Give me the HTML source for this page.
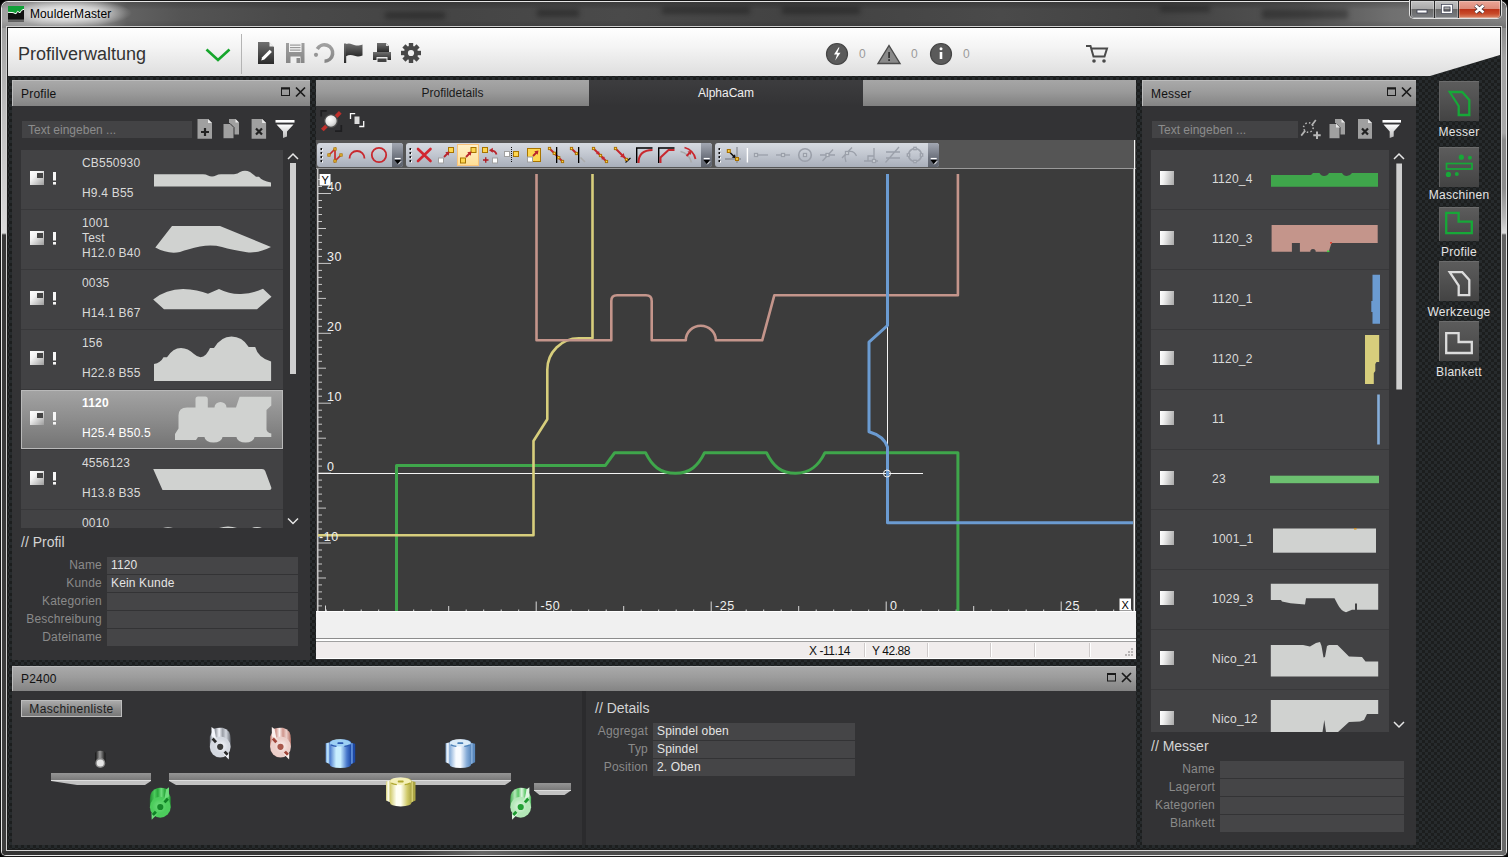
<!DOCTYPE html>
<html><head><meta charset="utf-8">
<style>
*{box-sizing:border-box;margin:0;padding:0}
html,body{width:1508px;height:857px;overflow:hidden;background:#000}
body{font-family:"Liberation Sans",sans-serif;font-size:12px;color:#ddd;position:relative}
.abs{position:absolute}


#client{left:8px;top:28px;width:1492px;height:821px;overflow:hidden;background-color:#1c1e1e;background-image:conic-gradient(from 90deg,#272b2d 25%,#1c1e1e 0 50%,#272b2d 0 75%,#1c1e1e 0);background-size:6px 6px;background-position:4px 1px}
#hdr{left:8px;top:28px;width:1492px;height:48px;background:linear-gradient(#ffffff,#f4f4f4 40%,#dedede);clip-path:polygon(0 0,1492px 0,1492px 27px,1422px 48px,0 48px)}
.phead{background:linear-gradient(#aaaaaa,#9c9c9c 45%,#848484);color:#111;height:26px;line-height:28px;padding-left:9px;font-size:12px;letter-spacing:.2px;box-shadow:inset 1px 1px 0 #bcbcbc}
.pbody{background:#333335}
.lbl{color:#8a8a8a;text-align:right;font-size:12px}
.fld{background:#454547;color:#e4e4e4;height:17px;line-height:17px;padding-left:4px;font-size:12px}

.it{position:absolute;left:21px;width:262px;height:59px;background:#424244}
.it.sel{background:linear-gradient(#a3a3a3,#8c8c8c 50%,#747474);border:1px solid #b9b9b9;color:#fff}
.it .t{position:absolute;left:61px;font-size:12px;color:#dadada;white-space:nowrap;line-height:15px;letter-spacing:.2px}
.it.sel .t{color:#fff}
.cb{position:absolute;width:14px;height:14px;background:linear-gradient(135deg,#ffffff,#f2f2f2 35%,#9c9c9c)}
.cb i{position:absolute;right:1px;top:1.500px;width:6px;height:5.500px;background:#444}
.ex{position:absolute;width:3px;height:13px;font-size:0;background:linear-gradient(#f6f6f6,#f6f6f6) 0 0/3px 8.500px no-repeat,linear-gradient(#f6f6f6,#f6f6f6) 0 10px/3px 2.600px no-repeat}
.inp{position:absolute;background:#434345;color:#8c8c8c;font-size:12px;height:17px;line-height:19px;padding-left:6px;letter-spacing:0}
.sec{position:absolute;font-size:15px;color:#d4d4d4}
.lbl{position:absolute;color:#8a8a8a;text-align:right;font-size:12px;height:16px;line-height:16px;letter-spacing:.2px}
.fld{position:absolute;background:#454547;color:#e4e4e4;height:16.600px;line-height:16px;padding-left:4px;font-size:12px;letter-spacing:.15px}

.tab{position:absolute;top:80px;height:26px;line-height:27px;text-align:center;font-size:12px;color:#1a1a1a;background:linear-gradient(#a6a6a6,#9a9a9a 45%,#808080)}
.tab.act{background:linear-gradient(#3d3d3f,#333335);color:#f0f0f0}
.tb{position:absolute;top:143px;height:24px;border-radius:3px;background:linear-gradient(#d6dae1,#c3c8d1 45%,#a9afba);overflow:hidden}
.tb .ov{position:absolute;right:0;top:0;width:11px;height:24px;background:linear-gradient(#a2a7b2,#6d727d 60%,#5d626c)}

.mi{position:absolute;left:1151px;width:238px;height:59px;background:#424244}
.mi .cb2{position:absolute;left:9px;top:21px;width:14px;height:14px;background:linear-gradient(100deg,#ffffff,#f0f0f0 30%,#a8a8a8)}
.mi .t{position:absolute;left:61px;top:22px;font-size:12px;color:#dadada;letter-spacing:.25px;line-height:15px}
.sb{position:absolute;left:1439px;width:40px;background:linear-gradient(#5c5c5c,#505050 50%,#434343);border-top:1px solid #6c6c6c;border-left:1px solid #626262}
.sl{position:absolute;width:90px;left:1414px;text-align:center;font-size:12px;color:#e4e4e4;letter-spacing:.3px;line-height:14px}

#f0{left:0;top:0;width:1508px;height:857px;background:#161616;border-radius:8px 8px 5px 5px}
#f1{left:1px;top:1px;width:1506px;height:855px;background:#e6e6e6;border-radius:7px 7px 5px 5px}
#f2{left:2px;top:2px;width:1504px;height:853px;border-radius:6px 6px 4px 4px;overflow:hidden;background:#3a3a3a}
#tbar{left:0;top:0;width:1504px;height:26px;background:linear-gradient(90deg,#a0a0a0 0,#b0b0b0 40px,#969696 95px,#626262 125px,#545454 180px,#4a4a4a 280px,#444 420px,#4a4a4a 620px,#424242 800px,#4a4a4a 1000px,#424242 1150px,#525252 1300px,#707070 1390px,#828282 1504px)}
#tshade{left:0;top:0;width:1504px;height:26px;background:linear-gradient(#00000030,#00000000 30%,#00000000 70%,#00000020)}
#lband{left:0;top:26px;width:4px;height:827px;background:linear-gradient(#a2a2a2 0,#c0c0c0 90px,#dadada 205px,#383838 207px,#3e3e3e 100%)}
#rband{left:1500px;top:26px;width:4px;height:827px;background:linear-gradient(#8c8c8c 0,#a4a4a4 30px,#a8a8a8 105px,#8a8a8a 112px,#8c8c8c 160px,#b8b8b8 190px,#dcdcdc 205px,#606060 207px,#787878 400px,#686868 100%)}
#bband{left:0;top:849px;width:1504px;height:4px;background:linear-gradient(90deg,#333 0,#3a3a3a 400px,#666 480px,#4a4a4a 560px,#484848 900px,#5c5c5c 1200px,#6c6c6c 1504px)}
#f3{left:6px;top:26px;width:1496px;height:825px;background:#cfcfcf}
#f4{left:7px;top:27px;width:1494px;height:823px;background:#1c1c1c}
.wb{position:absolute;top:1px;height:17px}
</style></head><body>
<div id="f0" class="abs"></div><div id="f1" class="abs"></div>
<div id="f2" class="abs"><div id="tbar" class="abs"></div><div id="tshade" class="abs"></div><div id="lband" class="abs"></div><div id="rband" class="abs"></div><div id="bband" class="abs"></div><div class="abs" style="left:-2px;margin-left:385px;top:-2px;margin-top:12px;width:60px;height:7px;background:#0000004a;filter:blur(2.500px)"></div><div class="abs" style="left:-2px;margin-left:537px;top:-2px;margin-top:9px;width:42px;height:8px;background:#0000004a;filter:blur(2.500px)"></div><div class="abs" style="left:-2px;margin-left:662px;top:-2px;margin-top:7px;width:88px;height:7px;background:#0000004a;filter:blur(2.500px)"></div><div class="abs" style="left:-2px;margin-left:782px;top:-2px;margin-top:7px;width:78px;height:7px;background:#0000004a;filter:blur(2.500px)"></div><div class="abs" style="left:-2px;margin-left:1262px;top:-2px;margin-top:9px;width:86px;height:10px;background:#0000004a;filter:blur(2.500px)"></div><div class="abs" style="left:-2px;margin-left:1160px;top:-2px;margin-top:6px;width:50px;height:6px;background:#0000004a;filter:blur(2.500px)"></div></div>
<div class="abs" style="left:8px;top:2px;width:130px;height:24px;background:radial-gradient(ellipse 62px 14px at 62px 11px,#ffffffd0,#ffffff90 50%,#ffffff00 100%)"></div>
<svg class="abs" style="left:8px;top:5px" width="18" height="17" viewBox="8 5 18 17">
 <rect x="8" y="6" width="16" height="15.500" fill="#111"/>
 <path d="M8 6 h16 v3.500 l-2.500 1 l-1.500 2.500 l-2.500 -1.500 l-1.500 2.500 l-3 -1.200 l-5 -0.300z" fill="#12a038"/>
 <path d="M8 12.300 l5 0.300 l3 1.200 l1.500 -2.500 l2.500 1.500 l1.500 -2.500 l2.500 -1" fill="none" stroke="#fff" stroke-width="1"/>
 <rect x="8" y="19.500" width="16" height="2" fill="#666"/>
</svg>
<div class="abs" style="left:30px;top:7px;font-size:12px;color:#000;line-height:14px;letter-spacing:.1px">MoulderMaster</div>
<!-- window buttons -->
<div class="abs" style="left:1409px;top:0;width:93px;height:19px;background:#e2e2e2;border-radius:0 0 5px 5px"></div>
<div class="abs" style="left:1410px;top:0;width:91px;height:18px;background:#2a2a2a;border-radius:0 0 4px 4px"></div>
<div class="wb" style="left:1411px;width:23px;border-radius:0 0 0 3px;background:linear-gradient(#c2c2c2 0,#a8a8a8 47%,#6a6a6a 50%,#7a7c80 100%);box-shadow:inset 0 0 0 1px #ffffff50"></div>
<div class="wb" style="left:1435px;width:23px;background:linear-gradient(#c2c2c2 0,#a8a8a8 47%,#6a6a6a 50%,#7a7c80 100%);box-shadow:inset 0 0 0 1px #ffffff50"></div>
<div class="wb" style="left:1459px;width:41px;border-radius:0 0 3px 0;background:linear-gradient(#eba697 0,#dc8a78 47%,#bc3318 50%,#c84a2a 75%,#d98a6c 100%);box-shadow:inset 0 0 0 1px #ffffff40"></div>
<svg class="abs" style="left:1409px;top:0" width="93" height="19" viewBox="1409 0 93 19">
 <rect x="1417" y="10" width="10" height="3" fill="#fff" stroke="#3a3e50" stroke-width="0.800"/>
 <rect x="1442.500" y="5.500" width="9" height="7" fill="none" stroke="#fff" stroke-width="2.200"/>
 <rect x="1441.500" y="4.500" width="11" height="9" fill="none" stroke="#3a3e50" stroke-width="0.700"/><rect x="1444" y="7" width="6" height="4" fill="none" stroke="#3a3e50" stroke-width="0.700"/>
 <path d="M1475.500 5.500 L1483.500 12.500 M1483.500 5.500 L1475.500 12.500" stroke="#3a3038" stroke-width="4"/>
 <path d="M1475.500 5.500 L1483.500 12.500 M1483.500 5.500 L1475.500 12.500" stroke="#fff" stroke-width="2.600"/>
</svg>
<div id="f3" class="abs"></div><div id="f4" class="abs"></div>
<div id="client" class="abs"></div>
<div id="hdr" class="abs"></div>
<div class="abs" style="left:18px;top:44px;font-size:18px;color:#333">Profilverwaltung</div>
<svg class="abs" style="left:0;top:28px" width="1508" height="48" viewBox="0 28 1508 48">
 <defs>
  <linearGradient id="gd" x1="0" y1="0" x2="0" y2="1"><stop offset="0" stop-color="#707070"/><stop offset="1" stop-color="#2a2a2a"/></linearGradient>
  <linearGradient id="gg" x1="0" y1="0" x2="0" y2="1"><stop offset="0" stop-color="#a0a0a0"/><stop offset="1" stop-color="#868686"/></linearGradient>
 </defs>
 <!-- chevron -->
 <path d="M206.5 49.5 L218 60 L229.5 49.5" fill="none" stroke="#16a62c" stroke-width="2.6"/>
 <rect x="241" y="34" width="1" height="40" fill="#b4b4b4"/>
 <!-- doc edit -->
 <path d="M258 42 h11 l5 5 v17 h-16z" fill="url(#gd)"/>
 <path d="M269.5 42 v4.5 h4.5z" fill="#eee"/>
 <path d="M261.2 60.5 l1-3.2 7.5-7.5 2.2 2.2 -7.5 7.5z" fill="#fff"/>
 <!-- save -->
 <path d="M286 43 h18.500 v20 h-18.5z" fill="url(#gg)"/>
 <rect x="289" y="43" width="12.500" height="9" fill="#f3f3f3"/>
 <rect x="290" y="44.500" width="10.500" height="1.200" fill="#999"/><rect x="290" y="47" width="10.500" height="1.200" fill="#999"/><rect x="290" y="49.500" width="10.500" height="1.200" fill="#999"/>
 <rect x="290.500" y="56.500" width="10" height="6.500" fill="#efefef"/><rect x="296.500" y="58" width="3.500" height="5" fill="#8a8a8a"/>
 <!-- undo -->
 <path d="M317.300 49 A8.200 8.200 0 1 1 324.500 61.200" fill="none" stroke="url(#gg)" stroke-width="3.600"/>
 <circle cx="316" cy="54.800" r="2.100" fill="#969696"/>
 <!-- flag -->
 <rect x="344" y="43.500" width="2.200" height="19.500" fill="url(#gd)"/>
 <path d="M346 44 c4 -1.500 6 0.500 9 1.200 c3 0.700 5 0 7.500 -0.800 v11 c-3 1.200 -5 1.400 -8 0.400 c-3 -1 -5.500 -1.200 -8.500 0.400z" fill="url(#gd)"/>
 <!-- print -->
 <path d="M377 43 h9 l3 3 v6 h-12z" fill="url(#gd)"/><path d="M386 43 v3 h3z" fill="#ddd"/>
 <path d="M373 52 h18 v8 h-3.500 v-3 h-11 v3 h-3.500z" fill="url(#gd)"/>
 <rect x="377.500" y="58.500" width="9" height="3.500" fill="#444"/>
 <!-- gear -->
 <g transform="translate(411 53)"><g fill="#484848">
  <rect x="-2.200" y="-10" width="4.400" height="20"/><rect x="-2.200" y="-10" width="4.400" height="20" transform="rotate(45)"/><rect x="-2.200" y="-10" width="4.400" height="20" transform="rotate(90)"/><rect x="-2.200" y="-10" width="4.400" height="20" transform="rotate(135)"/>
  <circle r="7.200"/></g><circle r="3.100" fill="#f0f0f0"/></g>
 <!-- status -->
 <circle cx="837" cy="54" r="10.500" fill="#5a5a5a" stroke="#454545" stroke-width="1.200"/>
 <path d="M838.500 47.500 l-4.500 7 h3 l-1.800 6 l5.300 -7.800 h-3.200 l2.200 -5.200z" fill="#fff"/>
 <path d="M889 45.500 L900 63.500 H878Z" fill="#8a8a8a" stroke="#4a4a4a" stroke-width="1.400" stroke-linejoin="miter"/>
 <rect x="888.200" y="52" width="1.800" height="6" fill="#333"/><rect x="888.200" y="59.200" width="1.800" height="1.800" fill="#333"/>
 <circle cx="941" cy="54" r="10.500" fill="#5a5a5a" stroke="#454545" stroke-width="1.200"/>
 <rect x="939.700" y="52" width="2.600" height="7" fill="#fff"/><circle cx="941" cy="48.800" r="1.500" fill="#fff"/>
 <!-- cart -->
 <path d="M1086 46 h4.500 l3 10.500 h11 l2.500 -8 h-15" fill="none" stroke="#4a4a4a" stroke-width="2"/>
 <circle cx="1094" cy="61" r="1.800" fill="#4a4a4a"/><circle cx="1104" cy="61" r="1.800" fill="#4a4a4a"/>
</svg>
<div class="abs" style="left:859px;top:47px;font-size:12px;color:#9a9a9a">0</div>
<div class="abs" style="left:911px;top:47px;font-size:12px;color:#9a9a9a">0</div>
<div class="abs" style="left:963px;top:47px;font-size:12px;color:#9a9a9a">0</div>

<!-- Profile panel -->
<div class="abs phead" style="left:12px;top:80px;width:298px">Profile</div>
<div class="abs pbody" id="pl" style="left:12px;top:106px;width:298px;height:554px"></div>

<div class="inp" style="left:22px;top:121px;width:170px">Text eingeben ...</div>
<svg class="abs" style="left:195px;top:117px" width="105" height="24" viewBox="195 117 105 24">
 <defs><linearGradient id="gw" x1="0" y1="0" x2="0" y2="1"><stop offset="0" stop-color="#ffffff"/><stop offset="1" stop-color="#b8b8b8"/></linearGradient></defs>
 <g fill="#a0a0a0">
  <path d="M197.500 119 h10.500 l4 4 v15.800 h-14.500z"/>
  <path d="M229 119 h6.500 l3.500 3.500 v12 h-10z"/><path d="M223 123.500 h7 l4 4 v11.300 h-11z" stroke="#333335" stroke-width="1"/>
  <path d="M251.600 119 h10.500 l4 4 v15.800 h-14.500z"/>
 </g>
 <path d="M208 119 v4 h4z M262.100 119 v4 h4z M235.500 119 v3.500 h3.500z" fill="#e8e8e8"/>
 <path d="M205 128 v8 M201 132 h8" stroke="#222" stroke-width="2.200"/>
 <path d="M256 128.500 l6 6 M262 128.500 l-6 6" stroke="#222" stroke-width="2.200"/>
 <rect x="275.500" y="120" width="19" height="2.600" fill="#fff"/>
 <path d="M276.500 124.500 h17 l-6.500 7 v5 l-4 1.500 v-6.500z" fill="url(#gw)"/>
</svg>
<!-- list -->
<div class="abs" style="left:21px;top:150px;width:262px;height:378px;background:#38383a"></div>
<div id="plist" class="abs" style="left:0;top:150px;width:312px;height:378px;overflow:hidden">
<div style="position:absolute;left:0;top:-150px">
<div class="it" style="top:150px"><div class="cb" style="left:9px;top:21px"><i></i></div><div class="ex" style="left:31.5px;top:21.8px"></div><div class="t" style="top:6px;left:61px">CB550930</div><div class="t" style="top:36px;left:61px">H9.4 B55</div></div>
<div class="it" style="top:210px"><div class="cb" style="left:9px;top:21px"><i></i></div><div class="ex" style="left:31.5px;top:21.8px"></div><div class="t" style="top:6px;left:61px">1001</div><div class="t" style="top:21px;left:61px">Test</div><div class="t" style="top:36px;left:61px">H12.0 B40</div></div>
<div class="it" style="top:270px"><div class="cb" style="left:9px;top:21px"><i></i></div><div class="ex" style="left:31.5px;top:21.8px"></div><div class="t" style="top:6px;left:61px">0035</div><div class="t" style="top:36px;left:61px">H14.1 B67</div></div>
<div class="it" style="top:330px"><div class="cb" style="left:9px;top:21px"><i></i></div><div class="ex" style="left:31.5px;top:21.8px"></div><div class="t" style="top:6px;left:61px">156</div><div class="t" style="top:36px;left:61px">H22.8 B55</div></div>
<div class="it sel" style="top:390px"><div class="cb" style="left:8px;top:20px"><i></i></div><div class="ex" style="left:30.5px;top:20.8px"></div><div class="t" style="top:5px;left:60px;font-weight:bold">1120</div><div class="t" style="top:35px;left:60px">H25.4 B50.5</div></div>
<div class="it" style="top:450px"><div class="cb" style="left:9px;top:21px"><i></i></div><div class="ex" style="left:31.5px;top:21.8px"></div><div class="t" style="top:6px;left:61px">4556123</div><div class="t" style="top:36px;left:61px">H13.8 B35</div></div>
<div class="it" style="top:510px"><div class="cb" style="left:9px;top:21px"><i></i></div><div class="ex" style="left:31.5px;top:21.8px"></div><div class="t" style="top:6px;left:61px">0010</div></div>
<svg style="position:absolute;left:0;top:0" width="312" height="540" viewBox="0 0 312 540"><g fill="#d0d2d0"><path d="M154 174.300 H203 Q206 174.300 208 175.600 Q212 177.500 216 175.600 Q218 174.300 221 174.300 H234 Q238 174 240 172 Q245 169.500 250 172 Q254 175 256 176.800 H259 Q262 181 271 182.500 V186.600 H154Z"/><path d="M172 226 H220 L271 247 Q258 253.500 247 252.300 Q232 250 222 247 Q212 244.500 200 246.500 Q188 249 180 252 Q168 254.500 155.300 247.500Z"/><path d="M153.200 299.500 Q166 289 183 289 Q198 289.500 208 293.800 L219 289 Q230 294.500 241 294 Q254 293 263 288.800 L271.500 296.800 L257 309.300 H164Z"/><path d="M154 381 V363.900 Q160.500 363 163.500 357.200 H167 Q173 348 181 348 Q188 348 194 354 Q200.500 360 206 354.500 Q208.500 351.500 210 348 H214 Q221 336.600 231.500 336.600 Q242 336.600 248.700 346.900 H255.200 Q258 357.500 271.100 361.500 V381Z"/><path d="M175 440 V434 L178.500 428.500 V415.500 Q178.500 407.500 187 407.500 H195.500 V399 Q195.500 396.500 198 396.500 H205.300 Q207.800 396.500 207.800 399 V407.500 H214.500 A6 5.500 0 0 1 226.500 407.500 H236 L239.600 396.800 H271.300 V405.500 L266.500 410 V429.500 Q267 432.500 271.300 433.500 V437 H254.500 A9 5.600 0 0 1 236.500 437 H222.500 A9 5.600 0 0 1 204.500 437 H198 L196 440Z"/><path d="M153.200 469 H262 Q264.500 469 265.200 471 L271.300 487.500 Q271.800 490 269.500 490 H162.500Z"/><path d="M163 528 q5 -1.500 10 0z M219 528 q9 -3 18 0z M252 528 q5 -2 10 0z"/></g></svg>
</div></div>
<svg class="abs" style="left:286px;top:150px" width="14" height="380" viewBox="286 150 14 380">
 <path d="M288 159 l5 -5 l5 5" fill="none" stroke="#e6e6e6" stroke-width="1.500"/>
 <rect x="290" y="163" width="6" height="211" fill="#cfcfcf"/>
 <path d="M288 518.500 l5 5 l5 -5" fill="none" stroke="#e6e6e6" stroke-width="1.500"/>
</svg>
<div class="sec" style="left:21px;top:534px;font-size:14px">// Profil</div>
<div class="lbl" style="left:12px;top:557px;width:90px">Name</div><div class="fld" style="left:107px;top:557px;width:191px">1120</div>
<div class="lbl" style="left:12px;top:575px;width:90px">Kunde</div><div class="fld" style="left:107px;top:575px;width:191px">Kein Kunde</div>
<div class="lbl" style="left:12px;top:593px;width:90px">Kategorien</div><div class="fld" style="left:107px;top:593px;width:191px"></div>
<div class="lbl" style="left:12px;top:611px;width:90px">Beschreibung</div><div class="fld" style="left:107px;top:611px;width:191px"></div>
<div class="lbl" style="left:12px;top:629px;width:90px">Dateiname</div><div class="fld" style="left:107px;top:629px;width:191px"></div>

<!-- center -->
<div class="abs pbody" id="ctr" style="left:316px;top:80px;width:820px;height:580px"></div>

<div class="tab" style="left:316px;width:273px">Profildetails</div>
<div class="tab act" style="left:589px;width:274px">AlphaCam</div>
<div class="tab" style="left:863px;width:273px"></div>
<svg class="abs" style="left:318px;top:108px" width="52" height="28" viewBox="318 108 52 28">
 <defs><radialGradient id="ball" cx="0.4" cy="0.35" r="0.7"><stop offset="0" stop-color="#fff"/><stop offset="0.6" stop-color="#e2e2e2"/><stop offset="1" stop-color="#b0b0b0"/></radialGradient></defs>
 <path d="M321.200 116.500 v-5.700 h5.500 M341.300 125 v6.200 h-6.300" fill="none" stroke="#1e1e20" stroke-width="1.700"/>
 <path d="M322.300 130 L340.300 112.300" stroke="#c0302c" stroke-width="3.800"/>
 <circle cx="331" cy="121" r="6.300" fill="url(#ball)" stroke="#4a4a4a" stroke-width="1.200"/>
 <path d="M350.500 119 v-5.400 h4.700 M363.700 121 v5.500 h-4.500" fill="none" stroke="#fafafa" stroke-width="1.300"/>
 <rect x="354.500" y="116.500" width="5" height="7.500" fill="#dcdcdc"/>
</svg>
<div class="abs" style="left:316px;top:140px;width:820px;height:28px;background:#555"></div>
<div class="abs" style="left:316px;top:167.500px;width:820px;height:1.500px;background:#9a9a9a"></div>
<div class="abs" style="left:1133.500px;top:140px;width:1.500px;height:30px;background:#f4f4f4"></div>
<div class="tb" style="left:317px;width:86px"><div class="ov"></div></div>
<div class="tb" style="left:406px;width:306px"><div class="ov"></div></div>
<div class="tb" style="left:715px;width:224px"><div class="ov"></div></div>
<div class="abs" style="left:457px;top:144px;width:22px;height:22px;background:linear-gradient(#fff0c8,#ffdf96);border:1px solid #f9c27a"></div>
<svg class="abs" style="left:316px;top:140px" width="630" height="30" viewBox="316 140 630 30">
 <defs>
  <g id="ys"><rect x="-2.500" y="-2.500" width="5" height="5" fill="#fdd650" stroke="#a87400" stroke-width="1"/></g>
  <g id="ws"><rect x="-2.500" y="-2.500" width="5" height="5" fill="#fff" stroke="#a0a0a0" stroke-width="1"/></g>
  <g id="yn"><rect x="-1.150" y="-1.150" width="2.300" height="2.300" fill="#ffd84a" stroke="#a87000" stroke-width="0.900"/></g>
  <g id="grip"><path d="M0 0 v2 M0 4 v2 M0 8 v2 M0 12 v2" stroke="#111" stroke-width="1.600"/><path d="M1.200 1 v1.600 M1.200 5 v1.600 M1.200 9 v1.600 M1.200 13 v1.600" stroke="#fff" stroke-width="1"/></g>
  <g id="ovg"><rect x="-2.800" y="-1.100" width="6" height="1.200" fill="#fff"/><path d="M-3 1 h6.400 l-3.200 4z" fill="#000"/><path d="M0.800 5.300 l2.800 -3" stroke="#fff" stroke-width="1"/></g>
 </defs>
 <use href="#grip" x="321.300" y="148"/><use href="#grip" x="410.300" y="148"/><use href="#grip" x="719.300" y="148"/>
 <use href="#ovg" x="397.500" y="159"/><use href="#ovg" x="706.500" y="159"/><use href="#ovg" x="933.500" y="159"/>
 <!-- tb1 -->
 <path d="M329 155 L335 149 V161 L341 155" fill="none" stroke="#c8282e" stroke-width="1.700"/>
 <use href="#yn" x="329" y="155"/><use href="#yn" x="335" y="149"/><use href="#yn" x="335" y="161"/><use href="#yn" x="341" y="155"/>
 <path d="M349.500 158.500 A7.500 7.500 0 0 1 364.500 158.500" fill="none" stroke="#c8282e" stroke-width="1.800"/>
 <circle cx="379" cy="155" r="7.200" fill="none" stroke="#c8282e" stroke-width="1.800"/>
 <!-- tb2 -->
 <path d="M418 149 L430.500 161 M430.500 149 L418 161" stroke="#d22630" stroke-width="2.600" stroke-linecap="round"/>
 <use href="#ys" x="451" y="150"/><use href="#ws" x="441" y="160.500"/><path d="M444 157 L448 153" stroke="#b8242c" stroke-width="1.800"/><path d="M449.500 151.500 l-4.200 0.800 l3.400 3.400z" fill="#b8242c"/>
 <use href="#ys" x="473.500" y="150"/><use href="#ys" x="463" y="160.500"/><path d="M466 157 L470 153" stroke="#b8242c" stroke-width="1.800"/><path d="M471.500 151.500 l-4.200 0.800 l3.400 3.400z" fill="#b8242c"/>
 <use href="#ys" x="485" y="150"/><use href="#ws" x="495" y="160.500"/><path d="M483 160 h5.500 M485.750 157.300 v5.500" stroke="#b01820" stroke-width="1.300"/>
 <path d="M496.500 154.500 q-1 -4 -5.500 -4.200" fill="none" stroke="#b8242c" stroke-width="1.800"/><path d="M489 150.300 l3.800 -2.500 v5z" fill="#b8242c"/>
 <use href="#ws" x="507" y="154"/><use href="#ys" x="516" y="154"/><path d="M511.500 147 v15" stroke="#111" stroke-width="1" stroke-dasharray="1 1"/>
 <rect x="527.500" y="148.500" width="13" height="13" fill="#fdd650" stroke="#a87400"/><use href="#ws" x="530" y="159.500"/><path d="M533 156 L537 152" stroke="#b8242c" stroke-width="1.800"/><path d="M538.500 150.500 l-4.200 0.800 l3.400 3.400z" fill="#b8242c"/>
 <path d="M549 148 L563 162" stroke="#c4262e" stroke-width="1.900"/><rect x="556" y="147" width="1.300" height="16" fill="#000"/><use href="#yn" x="549.500" y="148.500"/><use href="#yn" x="554.300" y="153.300"/><use href="#yn" x="558.700" y="157.700"/><use href="#yn" x="562.500" y="161.500"/>
 <path d="M571 148 L577 154" stroke="#c4262e" stroke-width="1.900"/><rect x="578" y="147" width="1.300" height="16" fill="#000"/><path d="M580.500 157.500 L585 162" stroke="#aaa" stroke-width="1.600"/><use href="#yn" x="571.500" y="148.500"/><use href="#yn" x="576.500" y="153.500"/>
 <path d="M593 148 L607 162" stroke="#c4262e" stroke-width="1.900"/><path d="M599.500 154.500 l-3.600 -0.400 l3.200 -3.200z M601.500 156.500 l3.600 0.400 l-3.200 3.200z" fill="#c8282e"/><use href="#yn" x="593.500" y="148.500"/><use href="#yn" x="600.500" y="155.500"/><use href="#yn" x="606.500" y="161.500"/>
 <path d="M615 148 L627 160" stroke="#c4262e" stroke-width="1.900"/><path d="M624.500 157.500 l-4.400 -0.600 l3.800 -3.800z" fill="#c8282e"/><path d="M625.500 162.500 L630.500 158" stroke="#111" stroke-width="1.200"/><use href="#yn" x="615.500" y="148.500"/><use href="#yn" x="626.500" y="159.500"/>
 <path d="M636 163 V147.300 H652.500 V148.700 H637.400 V163Z" fill="#000"/><path d="M638.500 163 Q638.500 150 652.500 150" fill="none" stroke="#c8282e" stroke-width="2"/>
 <path d="M658 163 V147.300 H674.500 V148.700 H659.400 V163Z" fill="#000"/><path d="M660.500 163 V157.500 L668.500 150 H674.500" fill="none" stroke="#c8282e" stroke-width="2"/>
 <path d="M680.500 151.500 Q689 153.500 691.500 162.500" fill="none" stroke="#aaa" stroke-width="1.600"/><path d="M684.500 147.500 Q693.500 150 695.500 159" fill="none" stroke="#c8282e" stroke-width="1.800"/><path d="M686.500 156 L690 152.500" stroke="#c4262e" stroke-width="1.900"/><path d="M691.500 151 l-4 0.600 l3.400 3.400z" fill="#c8282e"/>
 <!-- tb3 -->
 <path d="M725 159 H741 M737 147 V163" stroke="#8a8e96" stroke-width="1.300"/><path d="M730 152.500 L734.500 157" stroke="#111" stroke-width="1.500"/><path d="M735.800 158.300 l-4 -0.800 l3.200 -3.200z" fill="#111"/><use href="#yn" x="728.800" y="151" transform="translate(-182.200 -37.750) scale(1.250)"/><use href="#yn" x="737" y="159" transform="translate(-184.250 -39.750) scale(1.250)"/>
 <rect x="746.700" y="148" width="1.400" height="14.500" fill="#fff"/>
 <g fill="none" stroke="#9ba0aa" stroke-width="1.300">
  <path d="M758 155 H768"/><rect x="754.500" y="153.500" width="3" height="3" fill="#d8dbe0"/>
  <path d="M776 155 H790"/><rect x="781.500" y="153.500" width="3" height="3" fill="#d8dbe0"/>
  <circle cx="805" cy="155" r="6.300" stroke-width="1.600"/><rect x="803.500" y="153.500" width="3" height="3" fill="#d8dbe0"/>
  <path d="M820 155 H835 M822.500 161 L833 149.500"/><rect x="826" y="153.500" width="3" height="3" fill="#d8dbe0"/>
  <path d="M842 158 L852 147.500 M846 162 Q843 154 849 151.500 Q854 150.500 856.500 156"/><rect x="845.500" y="151.500" width="3" height="3" fill="#d8dbe0"/>
  <path d="M874 148 V161 M864 161 H878 M868 161 v-5 h6"/><rect x="872.500" y="159.500" width="3" height="3" fill="#d8dbe0"/>
  <path d="M886 152 H900 M886 158 H900 M885.500 162.500 L899 147"/>
  <circle cx="915" cy="155" r="6.500" stroke-width="1.600"/><rect x="913.800" y="147.300" width="2.400" height="2.400" fill="#d8dbe0"/><rect x="913.800" y="160.300" width="2.400" height="2.400" fill="#d8dbe0"/><rect x="907.300" y="153.800" width="2.400" height="2.400" fill="#d8dbe0"/><rect x="920.300" y="153.800" width="2.400" height="2.400" fill="#d8dbe0"/>
 </g>
</svg>

<div class="abs" style="left:316px;top:169px;width:820px;height:443px;background:#3c3c3c"></div>
<svg class="abs" style="left:316px;top:169px" width="820" height="443" viewBox="316 169 820 443">
 <rect x="317" y="169" width="1.500" height="442" fill="#c4c4c4"/>
 <rect x="1133.500" y="140" width="1.500" height="472" fill="#f4f4f4"/>
 <path d="M318 605.9 h4 M318 598.9 h4 M318 591.9 h4 M318 584.9 h4 M318 578.0 h8 M318 571.0 h4 M318 564.0 h4 M318 557.0 h4 M318 550.0 h4 M318 543.0 h13 M318 536.0 h4 M318 529.0 h4 M318 522.0 h4 M318 515.0 h4 M318 508.1 h8 M318 501.1 h4 M318 494.1 h4 M318 487.1 h4 M318 480.1 h4 M318 473.1 h13 M318 466.1 h4 M318 459.1 h4 M318 452.1 h4 M318 445.1 h4 M318 438.2 h8 M318 431.2 h4 M318 424.2 h4 M318 417.2 h4 M318 410.2 h4 M318 403.2 h13 M318 396.2 h4 M318 389.2 h4 M318 382.2 h4 M318 375.2 h4 M318 368.2 h8 M318 361.3 h4 M318 354.3 h4 M318 347.3 h4 M318 340.3 h4 M318 333.3 h13 M318 326.3 h4 M318 319.3 h4 M318 312.3 h4 M318 305.3 h4 M318 298.4 h8 M318 291.4 h4 M318 284.4 h4 M318 277.4 h4 M318 270.4 h4 M318 263.4 h13 M318 256.4 h4 M318 249.4 h4 M318 242.4 h4 M318 235.4 h4 M318 228.5 h8 M318 221.5 h4 M318 214.5 h4 M318 207.5 h4 M318 200.5 h4 M318 193.5 h13 M318 186.5 h4 M318 179.5 h4" stroke="#c8c8c8" stroke-width="1" fill="none"/>
 <path d="M326.2 611 v-1.5 M343.7 611 v-1.5 M361.2 611 v-1.5 M378.7 611 v-1.5 M396.2 611 v-1.5 M413.7 611 v-1.5 M431.2 611 v-1.5 M448.7 611 v-5 M466.2 611 v-1.5 M483.7 611 v-1.5 M501.2 611 v-1.5 M518.7 611 v-1.5 M536.2 611 v-9.5 M553.7 611 v-1.5 M571.2 611 v-1.5 M588.7 611 v-1.5 M606.2 611 v-1.5 M623.7 611 v-5 M641.2 611 v-1.5 M658.7 611 v-1.5 M676.2 611 v-1.5 M693.7 611 v-1.5 M711.2 611 v-9.5 M728.7 611 v-1.5 M746.2 611 v-1.5 M763.7 611 v-1.5 M781.2 611 v-1.5 M798.7 611 v-5 M816.2 611 v-1.5 M833.7 611 v-1.5 M851.2 611 v-1.5 M868.7 611 v-1.5 M886.2 611 v-9.5 M903.7 611 v-1.5 M921.2 611 v-1.5 M938.7 611 v-1.5 M956.2 611 v-1.5 M973.7 611 v-5 M991.2 611 v-1.5 M1008.7 611 v-1.5 M1026.2 611 v-1.5 M1043.7 611 v-1.5 M1061.2 611 v-9.5 M1078.7 611 v-1.5 M1096.2 611 v-1.5 M1113.7 611 v-1.5 M1131.2 611 v-1.5 M325.500 611 v-5.500" stroke="#d8d8d8" stroke-width="1" fill="none"/>
 <!-- axes -->
 <path d="M318 473.500 H923" stroke="#f4f4f4" stroke-width="1.200"/>
 <path d="M887.500 325 V448" stroke="#f4f4f4" stroke-width="1"/>
 <g fill="none" stroke-linejoin="round">
 <!-- green -->
 <path d="M396.500 611 V465.400 H605.400 L614.700 452.700 H645.500 C652 466 660 473.300 675.400 473.300 C690 473.300 698 466 704.500 452.700 H766.500 C773 466 781 473.300 795.600 473.300 C810 473.300 818.500 466 825 452.700 H957.900 V611" stroke="#3fa64b" stroke-width="3"/>
 <!-- yellow -->
 <path d="M592.500 174 V338.300 H579 A31.500 31.500 0 0 0 547.300 370 V419.200 L533.500 441 V535.300 H318" stroke="#d7ce7c" stroke-width="2.600"/>
 <!-- pink -->
 <path d="M536.500 174 V340.300 H611.300 V301 Q611.300 295.300 617 295.300 H646 Q651.700 295.300 651.700 301 V340.300 H685.800 A15 14.500 0 0 1 715.800 340.300 H762.200 L774.300 295.300 H957.900 V174" stroke="#c4958b" stroke-width="2.600"/>
 <!-- blue -->
 <path d="M887.500 174 V325.500 L869 342.200 V431.700 Q884 436 887.500 447 V522.700 H1133" stroke="#6b9bd1" stroke-width="3"/>
 </g>
 <circle cx="887" cy="473.500" r="3.500" fill="none" stroke="#f4f4f4" stroke-width="1"/>
 <rect x="319.500" y="174" width="11" height="11.500" fill="#fff"/>
 <rect x="1119.500" y="598.500" width="11.500" height="12" fill="#fff"/>
 <g font-family="Liberation Sans" font-size="12.500" fill="#f0f0f0" letter-spacing="0.600">
  <text x="327" y="191.3">40</text><text x="327" y="261.2">30</text><text x="327" y="331.1">20</text><text x="327" y="401.0">10</text><text x="327" y="470.9">0</text><text x="319" y="540.8">-10</text>
  <text x="540.500" y="610">-50</text><text x="715" y="610">-25</text><text x="890" y="610">0</text><text x="1065" y="610">25</text>
 </g>
 <g font-family="Liberation Sans" font-size="11" fill="#000"><text x="321.500" y="184">Y</text><text x="1121.500" y="609">X</text></g>
</svg>
<div class="abs" style="left:316px;top:611px;width:820px;height:1px;background:#fff"></div>
<div class="abs" style="left:316px;top:612px;width:820px;height:26px;background:#f0f0f0"></div>
<div class="abs" style="left:316px;top:638px;width:820px;height:4px;background:linear-gradient(#8c8c8c 0,#8c8c8c 25%,#fff 25%,#fff 75%,#a0a0a0 75%)"></div>
<div class="abs" style="left:316px;top:642px;width:820px;height:17px;background:#f0ecec;border-bottom:1px solid #fff"></div>
<div class="abs" style="left:809px;top:644px;font-size:12px;color:#111;letter-spacing:-0.450px;line-height:15px">X -11.14</div>
<div class="abs" style="left:872px;top:644px;font-size:12px;color:#111;letter-spacing:-0.450px;line-height:15px">Y 42.88</div>
<svg class="abs" style="left:860px;top:642px" width="276" height="17" viewBox="860 642 276 17">
 <path d="M864.500 643 v14 M927.500 643 v14 M990.500 643 v14 M1034.500 643 v14 M1089.500 643 v14" stroke="#cfcaca" stroke-width="1"/>
 <path d="M865.500 643 v14 M928.500 643 v14 M991.500 643 v14 M1035.500 643 v14 M1090.500 643 v14" stroke="#fff" stroke-width="1"/>
 <g fill="#b8b4b4"><rect x="1131" y="654" width="2" height="2"/><rect x="1128" y="654" width="2" height="2"/><rect x="1131" y="651" width="2" height="2"/><rect x="1125" y="654" width="2" height="2"/><rect x="1128" y="651" width="2" height="2"/><rect x="1131" y="648" width="2" height="2"/></g>
</svg>


<!-- Messer panel -->
<div class="abs phead" style="left:1142px;top:80px;width:274px">Messer</div>
<div class="abs pbody" id="pr" style="left:1142px;top:106px;width:274px;height:739px"></div>

<div class="inp" style="left:1152px;top:121px;width:146px">Text eingeben ...</div>
<svg class="abs" style="left:1298px;top:117px" width="108" height="24" viewBox="1298 117 108 24">
 <g fill="#a0a0a0">
  <path d="M1335 119 h6.500 l3.500 3.500 v12 h-10z"/><path d="M1329 123.500 h7 l4 4 v11.300 h-11z" stroke="#333335" stroke-width="1"/>
  <path d="M1358 119 h10 l4 4 v15.800 h-14z"/>
 </g>
 <path d="M1341.500 119 v3.500 h3.500z M1368 119 v4 h4z M1336 123.500 v4 h4z" fill="#e8e8e8"/>
 <path d="M1362 128.500 l6 6 M1368 128.500 l-6 6" stroke="#222" stroke-width="2.200"/>
 <circle cx="1308.400" cy="127.500" r="4.800" fill="none" stroke="#b4b4b4" stroke-width="1.600" stroke-dasharray="1.500 2.270"/>
 <path d="M1311.800 125.200 L1315.800 120 M1301.200 135.600 L1305.200 130.600" stroke="#b4b4b4" stroke-width="1.700"/>
 <path d="M1317 131.500 v7.400 M1313.300 135.200 h7.400" stroke="#b8b8b8" stroke-width="2"/>
 <rect x="1382.500" y="120" width="18.500" height="2.600" fill="#fff"/>
 <path d="M1383.500 124.500 h16.500 l-6.300 7 v5 l-4 1.500 v-6.500z" fill="url(#gw)"/>
</svg>
<div class="abs" style="left:1151px;top:150px;width:238px;height:582px;background:#38383a"></div>
<div class="abs" style="left:0;top:150px;width:1420px;height:582px;overflow:hidden"><div style="position:absolute;left:0;top:-150px"><div class="mi" style="top:150px"><div class="cb2"></div><div class="t">1120_4</div></div><div class="mi" style="top:210px"><div class="cb2"></div><div class="t">1120_3</div></div><div class="mi" style="top:270px"><div class="cb2"></div><div class="t">1120_1</div></div><div class="mi" style="top:330px"><div class="cb2"></div><div class="t">1120_2</div></div><div class="mi" style="top:390px"><div class="cb2"></div><div class="t">11</div></div><div class="mi" style="top:450px"><div class="cb2"></div><div class="t">23</div></div><div class="mi" style="top:510px"><div class="cb2"></div><div class="t">1001_1</div></div><div class="mi" style="top:570px"><div class="cb2"></div><div class="t">1029_3</div></div><div class="mi" style="top:630px"><div class="cb2"></div><div class="t">Nico_21</div></div><div class="mi" style="top:690px"><div class="cb2"></div><div class="t">Nico_12</div></div>
<svg style="position:absolute;left:1260px;top:150px" width="130" height="600" viewBox="1260 150 130 600">
 <path d="M1271 186.800 V175 H1311 L1313 173 H1319.500 Q1321 176 1324 176 Q1327.500 176 1329 173 H1342 Q1343.500 176 1346.800 176 Q1350 176 1352 173 H1378 V186.800Z" fill="#3fa64b"/>
 <path d="M1271.600 225 H1377.700 V242.900 H1331.500 L1328.700 251.800 H1315.700 a2.700 2.700 0 0 0 -5.400 0 H1299.900 V243.100 H1291.900 V251.800 H1271.600Z" fill="#c4958b"/><rect x="1330" y="242" width="2" height="1.600" fill="#e04030"/><rect x="1327" y="250.500" width="2.400" height="1.600" fill="#40d040"/>
 <path d="M1372.500 274.700 H1380 V323.700 H1372.500 V312 h-1.200 v-11 h1.200Z" fill="#6b9bd1"/>
 <path d="M1365 335 H1379.200 V362 H1376.500 L1375.300 364 V371 L1373.800 373 V384 H1365Z" fill="#d7ce7c"/>
 <rect x="1377.200" y="394.500" width="2.600" height="50" fill="#86aedb"/>
 <rect x="1270" y="475.700" width="109" height="7.500" fill="#6cc070"/>
 <rect x="1273" y="528.500" width="103" height="24.200" fill="#d0d2d0"/>
 <rect x="1354" y="528" width="2.500" height="1.500" fill="#c88a20"/>
 <path d="M1270.800 583.800 H1378.200 V609.700 H1357 V603.500 h-2 V609.700 H1352 L1346 612.300 Q1341 611 1337.500 604 L1334.500 598.200 H1306 L1305 604.500 L1290.500 603.200 L1282 601.500 L1281 600 H1270.800Z" fill="#d0d2d0"/>
 <path d="M1270.800 676.500 V645 H1303 L1310 646.500 L1316 643 L1320 642 L1321.500 646 L1323.500 657.500 L1325 657 L1327 646 L1329 645 H1337.500 L1349 656.500 L1362 657 L1365.500 661.500 H1378.200 V676.500Z" fill="#d0d2d0"/>
 <path d="M1270.800 700 H1378.200 V714 H1367 L1364 720 L1360 721.500 L1349 722 L1338 732 H1326 L1324.300 720 L1322.500 732 H1270.800Z" fill="#d0d2d0"/>
</svg></div></div>
<svg class="abs" style="left:1392px;top:150px" width="14" height="582" viewBox="1392 150 14 582">
 <path d="M1394 159 l5 -5 l5 5" fill="none" stroke="#e6e6e6" stroke-width="1.500"/>
 <rect x="1396.300" y="163.500" width="5.700" height="226" fill="#cfcfcf"/>
 <path d="M1394 722 l5 5 l5 -5" fill="none" stroke="#e6e6e6" stroke-width="1.500"/>
</svg>
<div class="sec" style="left:1151px;top:738px;font-size:14px">// Messer</div>
<div class="lbl" style="left:1125px;top:761px;width:90px">Name</div><div class="fld" style="left:1220px;top:761px;width:184px"></div><div class="lbl" style="left:1125px;top:779px;width:90px">Lagerort</div><div class="fld" style="left:1220px;top:779px;width:184px"></div><div class="lbl" style="left:1125px;top:797px;width:90px">Kategorien</div><div class="fld" style="left:1220px;top:797px;width:184px"></div><div class="lbl" style="left:1125px;top:815px;width:90px">Blankett</div><div class="fld" style="left:1220px;top:815px;width:184px"></div>
<!-- sidebar -->
<div class="sb" style="top:81px;height:40px"></div><div class="sl" style="top:125px">Messer</div>
<div class="sb" style="top:147px;height:40px"></div><div class="sl" style="top:188px">Maschinen</div>
<div class="sb" style="top:207px;height:34px"></div><div class="sl" style="top:245px">Profile</div>
<div class="sb" style="top:261px;height:40px"></div><div class="sl" style="top:305px">Werkzeuge</div>
<div class="sb" style="top:321px;height:40px"></div><div class="sl" style="top:365px">Blankett</div>
<svg class="abs" style="left:1439px;top:81px" width="40" height="285" viewBox="1439 81 40 285">
 <g fill="none" stroke-width="2.300" stroke-linejoin="miter">
  <path d="M1449.700 92 H1462.200 L1469.300 100 V115 H1458.700 V106Z" stroke="#17a838"/>
  <rect x="1446.500" y="163.500" width="25.500" height="5.500" stroke="#17a838" stroke-width="1.700"/>
  <path d="M1446.200 212.800 H1458.600 V221.600 H1471.800 V233.200 H1446.200Z" stroke="#17a838"/>
  <path d="M1449.700 272.200 H1462.300 L1469.300 280 V295.200 H1458.700 V285.500Z" stroke="#dcdcdc"/>
  <path d="M1446.200 333.200 H1458.600 V342 H1471.800 V353 H1446.200Z" stroke="#dcdcdc"/>
 </g>
 <g fill="#17a838"><circle cx="1461.300" cy="157.200" r="2.600"/><circle cx="1469.900" cy="157.800" r="2"/><circle cx="1448.400" cy="174.400" r="2.600"/><circle cx="1456.800" cy="174" r="2"/></g>
</svg>

<!-- bottom -->
<div class="abs phead" style="left:12px;top:666px;width:1124px;height:25px;line-height:27px">P2400</div>
<div class="abs pbody" id="pb" style="left:12px;top:691px;width:1124px;height:154px"></div>

<div class="abs" style="left:21px;top:700px;width:101px;height:17px;background:linear-gradient(#aaaaaa,#8e8e8e 50%,#787878);border:1px solid #bdbdbd;color:#1c1c1c;font-size:12px;line-height:17px;text-align:center;letter-spacing:.35px">Maschinenliste</div>
<div class="abs" style="left:582px;top:691px;width:4px;height:154px;background:#2b2b2d"></div>
<svg class="abs" style="left:12px;top:691px" width="575" height="154" viewBox="12 691 575 154">
 <defs>
  <linearGradient id="tbl" x1="0" y1="0" x2="0" y2="1"><stop offset="0" stop-color="#959595"/><stop offset="1" stop-color="#7a7a7a"/></linearGradient>
  <linearGradient id="spn" x1="0" y1="0" x2="1" y2="0"><stop offset="0" stop-color="#111"/><stop offset="0.45" stop-color="#9a9a9a"/><stop offset="0.6" stop-color="#777"/><stop offset="1" stop-color="#111"/></linearGradient>
 </defs>
 <rect x="51" y="773" width="100" height="7" fill="url(#tbl)"/><path d="M51 780 H151 V781 L145 785 H77 L51 781Z" fill="#c2c2c2"/><rect x="51" y="780" width="100" height="0.800" fill="#e4e4e4"/>
 <rect x="169" y="773" width="342" height="7" fill="url(#tbl)"/><path d="M169 780 H511 V781 L505 785 H176 L169 781Z" fill="#c2c2c2"/><rect x="169" y="780" width="342" height="0.800" fill="#e4e4e4"/>
 <rect x="534" y="783" width="37" height="7" fill="url(#tbl)"/><path d="M534 790 H571 V790.500 L564.500 795 H539.500 L534 790.500Z" fill="#c2c2c2"/><rect x="534" y="790" width="37" height="0.800" fill="#e4e4e4"/>
 <path d="M95.300 763 V753.500 Q95.300 750.800 100.300 750.800 Q105.400 750.800 105.400 753.500 V763Z" fill="url(#spn)"/>
 <circle cx="100.300" cy="763" r="5" fill="#8a8a8a"/><circle cx="100.300" cy="763" r="3.600" fill="#e6e6e6"/>

 <defs>
  <linearGradient id="cgb" x1="0" y1="0" x2="1" y2="0"><stop offset="0" stop-color="#6c7078"/><stop offset="0.12" stop-color="#d4d8e0"/><stop offset="0.28" stop-color="#9a9ea6"/><stop offset="0.45" stop-color="#f4f6fc"/><stop offset="0.62" stop-color="#9a9ea6"/><stop offset="0.78" stop-color="#d4d8e0"/><stop offset="1" stop-color="#6c7078"/></linearGradient>
  <radialGradient id="cgf" cx="0.55" cy="0.45" r="0.62"><stop offset="0" stop-color="#f4f6fc"/><stop offset="0.55" stop-color="#d4d8e0"/><stop offset="0.85" stop-color="#d4d8e0"/><stop offset="1" stop-color="#9a9ea6"/></radialGradient>
 </defs>
 <g transform="translate(220.2 746.8) scale(1 1)">
  <path d="M-10.400 0 V-10 L-6.500 -18 Q-2 -19.600 2.500 -19 Q10.400 -17 10.400 -8 V0Z" fill="url(#cgb)"/>
  <path d="M-8.700 -19.800 L-6 -17.800 L-4 -8 L-8.600 -10.500Z" fill="#f4f6fc"/>
  <ellipse cx="0" cy="0.200" rx="10.400" ry="10.500" fill="url(#cgf)"/>
  <path d="M8.600 12.800 L8.800 6 L4 8Z" fill="#f4f6fc"/>
  <path d="M-7.600 -8.200 L-4.200 -4.600 M4.400 4.800 L7.400 8" stroke="#2a2a2a" stroke-width="2.800"/>
  <path d="M-5.700 -9.800 L-2.300 -6.200 M3 6.300 L6 9.500" stroke="#f4f6fc" stroke-width="0.900" opacity="0.700"/>
  <circle cx="0" cy="0" r="3.100" fill="#3a3a3a"/>
 </g>
 <defs>
  <linearGradient id="cpb" x1="0" y1="0" x2="1" y2="0"><stop offset="0" stop-color="#b87468"/><stop offset="0.12" stop-color="#eccfca"/><stop offset="0.28" stop-color="#cf958c"/><stop offset="0.45" stop-color="#fbf0ee"/><stop offset="0.62" stop-color="#cf958c"/><stop offset="0.78" stop-color="#eccfca"/><stop offset="1" stop-color="#b87468"/></linearGradient>
  <radialGradient id="cpf" cx="0.55" cy="0.45" r="0.62"><stop offset="0" stop-color="#fbf0ee"/><stop offset="0.55" stop-color="#eccfca"/><stop offset="0.85" stop-color="#eccfca"/><stop offset="1" stop-color="#cf958c"/></radialGradient>
 </defs>
 <g transform="translate(280.5 746.8) scale(1 1)">
  <path d="M-10.400 0 V-10 L-6.500 -18 Q-2 -19.600 2.500 -19 Q10.400 -17 10.400 -8 V0Z" fill="url(#cpb)"/>
  <path d="M-8.700 -19.800 L-6 -17.800 L-4 -8 L-8.600 -10.500Z" fill="#fbf0ee"/>
  <ellipse cx="0" cy="0.200" rx="10.400" ry="10.500" fill="url(#cpf)"/>
  <path d="M8.600 12.800 L8.800 6 L4 8Z" fill="#fbf0ee"/>
  <path d="M-7.600 -8.200 L-4.200 -4.600 M4.400 4.800 L7.400 8" stroke="#a04438" stroke-width="2.800"/>
  <path d="M-5.700 -9.800 L-2.300 -6.200 M3 6.300 L6 9.500" stroke="#fbf0ee" stroke-width="0.900" opacity="0.700"/>
  <circle cx="0" cy="0" r="3.100" fill="#a8584c"/>
 </g>
 <defs>
  <linearGradient id="cgrb" x1="0" y1="0" x2="1" y2="0"><stop offset="0" stop-color="#208c30"/><stop offset="0.12" stop-color="#4ccc5c"/><stop offset="0.28" stop-color="#2aa83c"/><stop offset="0.45" stop-color="#6edc7c"/><stop offset="0.62" stop-color="#2aa83c"/><stop offset="0.78" stop-color="#4ccc5c"/><stop offset="1" stop-color="#208c30"/></linearGradient>
  <radialGradient id="cgrf" cx="0.55" cy="0.45" r="0.62"><stop offset="0" stop-color="#6edc7c"/><stop offset="0.55" stop-color="#4ccc5c"/><stop offset="0.85" stop-color="#4ccc5c"/><stop offset="1" stop-color="#2aa83c"/></radialGradient>
 </defs>
 <g transform="translate(160.3 807) scale(-1 1)">
  <path d="M-10.400 0 V-10 L-6.500 -18 Q-2 -19.600 2.500 -19 Q10.400 -17 10.400 -8 V0Z" fill="url(#cgrb)"/>
  <path d="M-8.700 -19.800 L-6 -17.800 L-4 -8 L-8.600 -10.500Z" fill="#6edc7c"/>
  <ellipse cx="0" cy="0.200" rx="10.400" ry="10.500" fill="url(#cgrf)"/>
  <path d="M8.600 12.800 L8.800 6 L4 8Z" fill="#6edc7c"/>
  <path d="M-7.600 -8.200 L-4.200 -4.600 M4.400 4.800 L7.400 8" stroke="#108026" stroke-width="2.800"/>
  <path d="M-5.700 -9.800 L-2.300 -6.200 M3 6.300 L6 9.500" stroke="#6edc7c" stroke-width="0.900" opacity="0.700"/>
  <circle cx="0" cy="0" r="3.100" fill="#16882a"/>
 </g>
 <defs>
  <linearGradient id="cglb" x1="0" y1="0" x2="1" y2="0"><stop offset="0" stop-color="#44b052"/><stop offset="0.12" stop-color="#b4e8b8"/><stop offset="0.28" stop-color="#5cc868"/><stop offset="0.45" stop-color="#e0f6e2"/><stop offset="0.62" stop-color="#5cc868"/><stop offset="0.78" stop-color="#b4e8b8"/><stop offset="1" stop-color="#44b052"/></linearGradient>
  <radialGradient id="cglf" cx="0.55" cy="0.45" r="0.62"><stop offset="0" stop-color="#e0f6e2"/><stop offset="0.55" stop-color="#b4e8b8"/><stop offset="0.85" stop-color="#b4e8b8"/><stop offset="1" stop-color="#5cc868"/></radialGradient>
 </defs>
 <g transform="translate(520.7 807) scale(-1 1)">
  <path d="M-10.400 0 V-10 L-6.500 -18 Q-2 -19.600 2.500 -19 Q10.400 -17 10.400 -8 V0Z" fill="url(#cglb)"/>
  <path d="M-8.700 -19.800 L-6 -17.800 L-4 -8 L-8.600 -10.500Z" fill="#e0f6e2"/>
  <ellipse cx="0" cy="0.200" rx="10.400" ry="10.500" fill="url(#cglf)"/>
  <path d="M8.600 12.800 L8.800 6 L4 8Z" fill="#e0f6e2"/>
  <path d="M-7.600 -8.200 L-4.200 -4.600 M4.400 4.800 L7.400 8" stroke="#1c9a30" stroke-width="2.800"/>
  <path d="M-5.700 -9.800 L-2.300 -6.200 M3 6.300 L6 9.500" stroke="#e0f6e2" stroke-width="0.900" opacity="0.700"/>
  <circle cx="0" cy="0" r="3.100" fill="#22a034"/>
 </g>
 <defs><linearGradient id="cb1" x1="0" y1="0" x2="1" y2="0"><stop offset="0" stop-color="#4878cc"/><stop offset="0.3" stop-color="#c8eeff"/><stop offset="0.5" stop-color="#c8eeff"/><stop offset="0.8" stop-color="#4878cc"/><stop offset="1" stop-color="#1c48a4"/></linearGradient>
 <linearGradient id="cb1w" x1="0" y1="0" x2="1" y2="0"><stop offset="0" stop-color="#6a9ae0"/><stop offset="0.5" stop-color="#c8eeff"/><stop offset="1" stop-color="#4a78c8"/></linearGradient></defs>
 <g transform="translate(325.7 739.3)">
  <path d="M0 4 L4.500 3 V25 L0 23Z" fill="url(#cb1w)"/><path d="M29.500 4.500 L25 3.500 V25 L29.500 23Z" fill="#1c48a4"/><path d="M25 3.500 l2 0.400 V24 l-2 1z" fill="#6a9ae0"/>
  <path d="M4 3.500 Q4 0 14.700 0 Q25.500 0 25.500 3.500 V25 Q25.500 28.800 14.700 28.800 Q4 28.800 4 25Z" fill="url(#cb1)"/>
  <ellipse cx="14.700" cy="3.700" rx="10.600" ry="3.600" fill="#9cd0f4"/>
  <rect x="11.700" y="3" width="6" height="1.800" rx="0.900" fill="#2a58b0"/>
  <path d="M5.300 5.600 q2.500 1.200 5.500 1.500 M24.200 5.600 q-2.500 1.200 -5.500 1.500" stroke="#2a58b0" stroke-width="1.300" fill="none"/>
 </g>
 <defs><linearGradient id="cb2" x1="0" y1="0" x2="1" y2="0"><stop offset="0" stop-color="#86acd8"/><stop offset="0.3" stop-color="#f8fbff"/><stop offset="0.5" stop-color="#f8fbff"/><stop offset="0.8" stop-color="#86acd8"/><stop offset="1" stop-color="#5a88bc"/></linearGradient>
 <linearGradient id="cb2w" x1="0" y1="0" x2="1" y2="0"><stop offset="0" stop-color="#8ab0da"/><stop offset="0.5" stop-color="#f8fbff"/><stop offset="1" stop-color="#7ea6d2"/></linearGradient></defs>
 <g transform="translate(445.6 739.3)">
  <path d="M0 4 L4.500 3 V25 L0 23Z" fill="url(#cb2w)"/><path d="M29.500 4.500 L25 3.500 V25 L29.500 23Z" fill="#5a88bc"/><path d="M25 3.500 l2 0.400 V24 l-2 1z" fill="#8ab0da"/>
  <path d="M4 3.500 Q4 0 14.700 0 Q25.500 0 25.500 3.500 V25 Q25.500 28.800 14.700 28.800 Q4 28.800 4 25Z" fill="url(#cb2)"/>
  <ellipse cx="14.700" cy="3.700" rx="10.600" ry="3.600" fill="#dcecf8"/>
  <rect x="11.700" y="3" width="6" height="1.800" rx="0.900" fill="#4a80b8"/>
  <path d="M5.300 5.600 q2.500 1.200 5.500 1.500 M24.200 5.600 q-2.500 1.200 -5.500 1.500" stroke="#4a80b8" stroke-width="1.300" fill="none"/>
 </g>
 <defs><linearGradient id="cy1" x1="0" y1="0" x2="1" y2="0"><stop offset="0" stop-color="#d0ca6a"/><stop offset="0.3" stop-color="#fffff2"/><stop offset="0.5" stop-color="#fffff2"/><stop offset="0.8" stop-color="#d0ca6a"/><stop offset="1" stop-color="#aaa444"/></linearGradient>
 <linearGradient id="cy1w" x1="0" y1="0" x2="1" y2="0"><stop offset="0" stop-color="#d4ce74"/><stop offset="0.5" stop-color="#fffff2"/><stop offset="1" stop-color="#cac464"/></linearGradient></defs>
 <g transform="translate(386 777.6)">
  <path d="M0 4 L4.500 3 V25 L0 23Z" fill="url(#cy1w)"/><path d="M29.500 4.500 L25 3.500 V25 L29.500 23Z" fill="#aaa444"/><path d="M25 3.500 l2 0.400 V24 l-2 1z" fill="#d4ce74"/>
  <path d="M4 3.500 Q4 0 14.700 0 Q25.500 0 25.500 3.500 V25 Q25.500 28.800 14.700 28.800 Q4 28.800 4 25Z" fill="url(#cy1)"/>
  <ellipse cx="14.700" cy="3.700" rx="10.600" ry="3.600" fill="#f4f0b8"/>
  <rect x="11.700" y="3" width="6" height="1.800" rx="0.900" fill="#b0a830"/>
  <path d="M5.300 5.600 q2.500 1.200 5.500 1.500 M24.200 5.600 q-2.500 1.200 -5.500 1.500" stroke="#b0a830" stroke-width="1.300" fill="none"/>
 </g></svg>
<div class="sec" style="left:595px;top:700px;font-size:14px">// Details</div>
<div class="lbl" style="left:558px;top:723px;width:90px">Aggregat</div><div class="fld" style="left:653px;top:723px;width:202px">Spindel oben</div><div class="lbl" style="left:558px;top:741px;width:90px">Typ</div><div class="fld" style="left:653px;top:741px;width:202px">Spindel</div><div class="lbl" style="left:558px;top:759px;width:90px">Position</div><div class="fld" style="left:653px;top:759px;width:202px">2. Oben</div>
<svg class="abs" style="left:0;top:80px" width="1508" height="620" viewBox="0 80 1508 620">
 <g fill="none" stroke="#1a1a1a">
  <rect x="281.500" y="88" width="8" height="7.500" stroke-width="1"/><path d="M281 88.500 h9" stroke-width="2"/>
  <path d="M296 87.500 l9 9 M305 87.500 l-9 9" stroke-width="1.700"/>
  <rect x="1387.500" y="88" width="8" height="7.500" stroke-width="1"/><path d="M1387 88.500 h9" stroke-width="2"/>
  <path d="M1402 87.500 l9 9 M1411 87.500 l-9 9" stroke-width="1.700"/>
  <rect x="1107.500" y="673.500" width="8" height="7.500" stroke-width="1"/><path d="M1107 674 h9" stroke-width="2"/>
  <path d="M1122 673 l9 9 M1131 673 l-9 9" stroke-width="1.700"/>
 </g>
</svg>
<!--END-->
</body></html>
